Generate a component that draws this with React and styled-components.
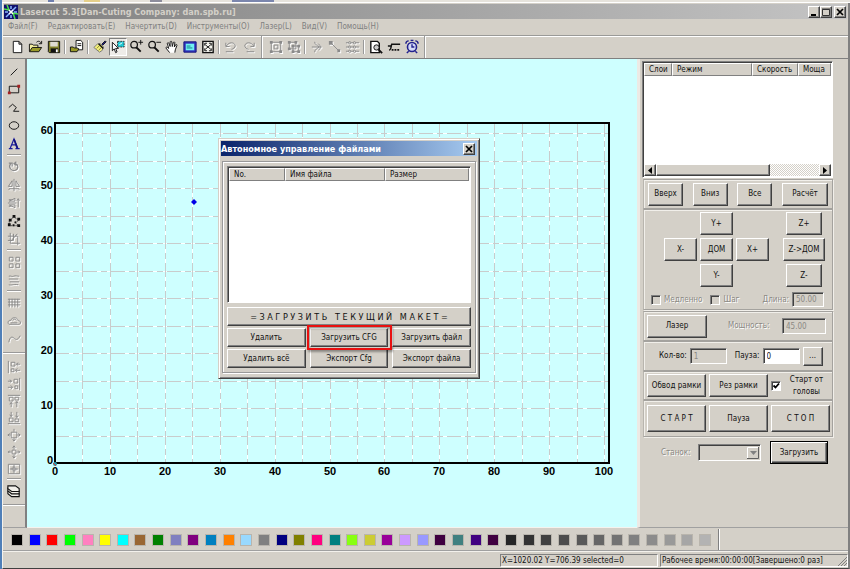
import React from "react";
import styled, { createGlobalStyle, css } from "styled-components";

const FACE = "#d4d0c8";
const MID = "#808080";
const DARK = "#404040";

const Global = createGlobalStyle`
  *, *::before, *::after { box-sizing: border-box; }
  html, body, #root { height: 100%; }
  body { margin: 0; background: ${FACE}; overflow: hidden; }
  body, button, input, select, table {
    font-family: "DejaVu Sans Condensed", "DejaVu Sans", "Noto Sans", sans-serif;
    font-size: 8px;
    line-height: 12px;
    color: #111;
  }
`;

const raised = css`
  border: 1px solid;
  border-color: #fff ${DARK} ${DARK} #fff;
  box-shadow: inset -1px -1px 0 ${MID};
`;
const sunken = css`
  border: 1px solid;
  border-color: ${MID} #fff #fff ${MID};
  box-shadow: inset 1px 1px 0 ${DARK};
`;

const Screen = styled.div`
  height: 100%;
  display: flex;
  flex-direction: column;
  border-left: 2px solid #4f7fb8;
  background: ${FACE};
`;
const Backdrop = styled.div`
  height: 3px;
  flex: none;
  background: linear-gradient(90deg, #e6e3dc 0 46px, #6f7fae 46px 52px, #e6e3dc 52px 82px, #e6d08a 82px 98px, #e6e3dc 98px 148px, #8d8d9c 148px 160px, #e6e3dc 160px 230px, #7b86ad 230px 272px, #e6e3dc 272px);
  border-bottom: 1px solid #fff;
`;
const Window = styled.main`
  flex: 1;
  min-height: 0;
  display: flex;
  flex-direction: column;
  border-left: 1px solid #f3f1ec;
  border-right: 2px solid ${MID};
  border-bottom: 1px solid ${DARK};
`;
const TitleBar = styled.header`
  height: 15px;
  flex: none;
  display: flex;
  align-items: center;
  gap: 2px;
  margin: 1px 1px 0;
  padding: 0 1px 0 0;
  background: linear-gradient(90deg, #808080, #c4c4c4);
`;
const Title = styled.h1`
  margin: 0;
  flex: 1;
  font-size: 9px;
  line-height: 14px;
  font-weight: bold;
  color: ${FACE};
`;
const CaptionButtons = styled.div`
  display: flex;
`;
const CaptionButton = styled.button`
  ${raised}
  width: 12px;
  height: 12px;
  padding: 0;
  margin-left: ${(p) => (p.$apart ? "2px" : "0")};
  background: ${FACE};
  display: grid;
  place-items: center;
`;
const MenuBar = styled.nav`
  height: 16px;
  flex: none;
  display: flex;
  align-items: center;
  gap: 10px;
  padding-left: 5px;
`;
const MenuItem = styled.button`
  border: 0;
  padding: 0;
  background: none;
  color: ${MID};
`;
const ToolBar = styled.div`
  height: 24px;
  flex: none;
  display: flex;
  align-items: center;
  padding-left: 5px;
  border-top: 1px solid #9a9a98;
  border-bottom: 1px solid ${MID};
  box-shadow: inset 0 1px 0 #fff;
`;
const ToolGroup = styled.div`
  display: flex;
  padding-left: 1px;
`;
const Divider = styled.span`
  width: 2px;
  height: ${(p) => (p.$full ? "22px" : "14px")};
  margin: ${(p) => (p.$full ? "0 3px" : "0 1px")};
  border-left: 1px solid #999;
  border-right: 1px solid #fff;
`;
const ToolButton = styled.button`
  width: 18px;
  height: 18px;
  padding: 0;
  border: 1px solid transparent;
  background: none;
  display: grid;
  place-items: center;
  svg { display: block; filter: ${(p) => (p.disabled ? "drop-shadow(1px 1px 0 #fff)" : "none")}; }
  color: ${(p) => (p.disabled ? "#8a8a8a" : "#111")};
  ${(p) => p.$pressed && css`
    border-color: ${MID} #fff #fff ${MID};
    background: #eeece8;
  `}
`;
const Body = styled.div`
  flex: 1;
  min-height: 0;
  display: flex;
`;
const SideBar = styled.div`
  width: 24px;
  flex: none;
  padding-top: 4px;
  border-right: 2px solid ${MID};
  border-bottom: 1px solid #a0a0a0;
`;
const SideGroup = styled.div`
  display: flex;
  flex-direction: column;
  align-items: center;
`;
const SideTool = styled(ToolButton)`
  height: ${(p) => (p.$short ? "17px" : "18px")};
`;
const SideRule = styled.hr`
  height: 2px;
  border: 0;
  border-top: 1px solid #999;
  border-bottom: 1px solid #fff;
  margin: ${(p) => (p.$wide ? "4px 0" : "1px 4px 2px")};
`;
const Canvas = styled.section`
  flex: 1;
  min-width: 0;
  position: relative;
  background: #ceffff;
  border-bottom: 1px solid #f5f3ee;
`;
const Plot = styled.svg`
  display: block;
  width: 100%;
  height: 100%;
  text { font: bold 11px "Liberation Sans", Arial, sans-serif; fill: #000; }
`;
const Dialog = styled.section`
  position: absolute;
  left: 191px;
  top: 79px;
  width: 262px;
  padding: 2px;
  background: ${FACE};
  border: 1px solid;
  border-color: ${FACE} ${DARK} ${DARK} ${FACE};
  box-shadow: inset 1px 1px 0 #fff, inset -1px -1px 0 ${MID};
`;
const DialogTitle = styled.header`
  display: flex;
  align-items: center;
  justify-content: space-between;
  height: 15px;
  padding: 0 2px 0 0;
  color: #fff;
  font-size: 9px;
  font-weight: bold;
  background: linear-gradient(90deg, #0a246a, #a6caf0);
`;
const DialogBody = styled.div`
  margin: 5px 1px 3px;
  padding: 4px;
  border: 1px solid #999;
  box-shadow: inset 1px 1px 0 #fff, 1px 1px 0 #fff;
`;
const ListBox = styled.div`
  ${sunken}
  height: ${(p) => (p.$tall ? "137px" : "117px")};
  padding: 1px;
  background: #fff;
  display: flex;
  flex-direction: column;
  justify-content: space-between;
  overflow: hidden;
`;
const Table = styled.table`
  width: 100%;
  table-layout: fixed;
  border-collapse: separate;
  border-spacing: 0;
`;
const HeadCell = styled.th`
  width: ${(p) => p.$w || "auto"};
  height: 13px;
  padding: 0 0 0 4px;
  background: ${FACE};
  border: 1px solid;
  border-color: #fff ${MID} ${MID} #fff;
  font-weight: normal;
  line-height: 11px;
  text-align: left;
  white-space: nowrap;
  overflow: hidden;
`;
const Push = styled.button`
  ${raised}
  min-width: 0;
  height: ${(p) => p.$h || "23px"};
  padding: 0;
  background: ${FACE};
  white-space: pre;
  text-align: center;
  ${(p) => p.$default && css`
    border-color: #000;
    box-shadow: inset 1px 1px 0 #fff, inset -1px -1px 0 ${DARK}, inset -2px -2px 0 ${MID};
  `}
`;
const DialogGrid = styled.div`
  display: grid;
  grid-template-columns: repeat(3, 1fr);
  gap: 2px 4px;
  margin-top: 4px;
`;
const WidePush = styled(Push)`
  grid-column: 1 / -1;
  font-size: 9px;
`;
const Marked = styled.div`
  position: relative;
  display: grid;
  &::after {
    content: "";
    position: absolute;
    inset: -3px -4px -3px -3px;
    border: 2px solid #e81010;
    box-shadow: 1px 2px 2px rgba(0, 0, 0, 0.35), inset 1px 2px 2px rgba(0, 0, 0, 0.25);
    pointer-events: none;
  }
`;
const Panel = styled.aside`
  width: 211px;
  flex: none;
  padding: 2px 15px 0 2px;
  border-left: 3px solid #eceae5;
  border-bottom: 1px solid #a0a0a0;
`;
const PanelEdge = styled.div`
  padding-left: 1px;
`;
const ScrollBar = styled.div`
  display: flex;
  height: 12px;
  background: repeating-conic-gradient(#fff 0 25%, ${FACE} 0 50%) 0 0 / 2px 2px;
`;
const ScrollButton = styled.button`
  ${raised}
  width: 12px;
  padding: 0;
  background: ${FACE};
  display: grid;
  place-items: center;
`;
const Thumb = styled.div`
  ${raised}
  width: 114px;
  margin-right: auto;
  background: ${FACE};
`;
const Group = styled.div`
  display: flex;
  align-items: center;
  height: ${(p) => p.$h};
  padding: 0 3px;
  gap: ${(p) => p.$gap || "3px"};
  margin-top: ${(p) => p.$mt || "0"};
  border: 1px solid #a4a29e;
  border-left-color: #b8b5ae;
  box-shadow: inset 1px 1px 0 #f1efea, 1px 1px 0 #f1efea;
  ${Push} { width: ${(p) => p.$bw || "auto"}; flex: none; }
`;
const MoveGroup = styled(Group)`
  justify-content: space-between;
  padding: 0 4px;
  ${Push} { width: 35px; }
  ${Push}:last-child { width: 46px; }
`;
const JogGroup = styled(Group)`
  flex-direction: column;
  align-items: stretch;
  gap: 5px;
  padding: 2px 8px 0 7px;
`;
const JogPad = styled.div`
  display: grid;
  grid-template-columns: 33px 33px 33px 8px 42px;
  gap: 3px;
  padding-left: 13px;
  ${Push} { width: auto; }
`;
const JogKey = styled(Push)`
  grid-area: ${(p) => p.$at};
  margin: ${(p) => (p.$inset ? "0 3px" : "0")};
`;
const Row = styled.div`
  display: flex;
  align-items: center;
  gap: ${(p) => p.$gap || "3px"};
`;
const FieldLabel = styled.label`
  white-space: nowrap;
  text-align: ${(p) => (p.$center ? "center" : "left")};
  flex: ${(p) => (p.$grow ? "1" : "none")};
  margin-left: ${(p) => p.$ml || "0"};
  ${(p) => p.$off && css`
    color: #8b8984;
    text-shadow: 1px 1px 0 #fff;
  `}
`;
const Field = styled.input`
  ${sunken}
  width: ${(p) => p.$w};
  height: ${(p) => p.$h || "16px"};
  padding: 0 3px;
  margin: 0;
  border-radius: 0;
  background: #fff;
  &:disabled { background: ${FACE}; color: #8b8984; }
`;
const Tick = styled.input`
  ${sunken}
  appearance: none;
  width: 10px;
  height: 10px;
  flex: none;
  margin: 0;
  margin-left: ${(p) => p.$ml || "0"};
  background: #fff;
  &:disabled { background: ${FACE}; }
  &:checked {
    background: #fff url("data:image/svg+xml,%3Csvg xmlns='http://www.w3.org/2000/svg' viewBox='0 0 8 8'%3E%3Cpath d='M1.5 3.5l2 2 3.5-4' fill='none' stroke='%23000' stroke-width='1.8'/%3E%3C/svg%3E") center / 8px 8px no-repeat;
  }
`;
const MachineRow = styled(Row)`
  margin: 4px 5px 0 18px;
  ${Push} { width: 58px; }
`;
const Combo = styled.select`
  ${sunken}
  appearance: none;
  width: 63px;
  height: 17px;
  margin-left: auto;
  margin-right: 6px;
  border-radius: 0;
  opacity: 1;
  background: ${FACE} url("data:image/svg+xml,%3Csvg xmlns='http://www.w3.org/2000/svg' viewBox='0 0 12 12'%3E%3Cpath d='M0 0h12v12H0z' fill='%23d4d0c8'/%3E%3Cpath d='M.5 12V.5H12' fill='none' stroke='%23fff'/%3E%3Cpath d='M11.5 0v11.5H0' fill='none' stroke='%23606060'/%3E%3Cpath d='M3 4h7l-3.500 4z' fill='%23808080'/%3E%3C/svg%3E") right 1px center / 12px 12px no-repeat;
`;
const Palette = styled.div`
  height: 23px;
  flex: none;
  display: flex;
  align-items: center;
  padding: 1px 0 0 8px;
  border-bottom: 1px solid #a0a0a0;
`;
const Swatches = styled.div`
  flex: 0 1 700px;
  display: flex;
  justify-content: space-between;
`;
const Swatch = styled.button`
  width: 12px;
  height: 12px;
  padding: 0;
  border: 1px solid #b9b5ad;
  background: ${(p) => p.$color};
`;
const PaletteEnd = styled.span`
  align-self: stretch;
  width: 2px;
  margin-left: 7px;
  border-left: 1px solid ${MID};
  border-right: 1px solid #fff;
`;
const StatusBar = styled.footer`
  height: 17px;
  flex: none;
  display: flex;
  justify-content: flex-end;
  align-items: center;
  gap: 2px;
  border-top: 1px solid #f3f1ec;
`;
const StatusCell = styled.div`
  width: ${(p) => p.$w};
  height: 13px;
  padding-left: 1px;
  white-space: nowrap;
  border: 1px solid;
  border-color: ${MID} #fff #fff ${MID};
  line-height: 11px;
  display: flex;
  justify-content: space-between;
`;

const s = { fill: "none", stroke: "currentColor", strokeWidth: 1 };
const lensBody = <g><circle cx="6.500" cy="6" r="3.500" {...s} strokeWidth="1.300" /><path d="M9 9l4.500 4.500" {...s} strokeWidth="2" /></g>;

const ICONS = {
  new: <path d="M3.500 2.500h6l3 3v9h-9zM9.500 2.500v3h3" {...s} fill="#fff" />,
  open: <g><path d="M1.500 13V5.500h3l1 1h5V9" {...s} fill="#f6f0a0" /><path d="M1.500 13.500L4.500 9h10l-3 4.500z" {...s} fill="#9a9a28" /><path d="M9 3.500c2-2 4-1 5 1M14.500 2v3h-3" {...s} /></g>,
  save: <g><path d="M2.500 2.500h12v12h-11l-1-1z" {...s} fill="#80802a" /><path d="M4.500 3h8v5h-8z" fill="#dedbd2" /><path d="M5 10h8v4H5z" fill="#111" /><path d="M10.500 11h2v3h-2z" fill="#fff" /></g>,
  import: <g><path d="M7.500 1.500h5l2 2v8h-7z" {...s} fill="#fff" /><path d="M9 5h4M9 7h4" {...s} /><path d="M1.500 13.500V8.500h3l1 1h3l2 1-2 3z" {...s} fill="#9a9a28" /></g>,
  brush: <g><path d="M10 6l4-4 1 1-4 4z" fill="#1a1a90" stroke="#111" /><path d="M2 9l4-4h3l3 3-1 4-3 2z" fill="#f3ee7c" stroke="#777" /><path d="M5 10l3-3M7 12l3-3" stroke="#8a8a28" /><path d="M7 5l5 5" stroke="#111" strokeWidth="1.500" /></g>,
  select: <g><path d="M8 2.500h7v6H8z" fill="#1fc9d4" stroke="#333" strokeDasharray="2 1" /><path d="M2.500 3.500v9l2-2 1.500 4 1.500-.8-1.500-3.700h3z" {...s} fill="#fff" /><path d="M10 6l3-2" stroke="#fff" /></g>,
  zoomIn: <g>{lensBody}<path d="M11 3.500h5M13.500 1v5" {...s} /></g>,
  zoomOut: <g>{lensBody}<path d="M11 3.500h5" {...s} /></g>,
  hand: <path d="M6 14.500L2 9.500c0-1 1.200-1.300 2-.3L5 10 3.500 4.500c.5-1 1.500-.6 1.800.3L6.500 8 6.500 3c.6-1 1.600-.8 1.800.2L8.800 8l1.200-4.500c.8-.7 1.500-.3 1.500.6L11 8.500 12.500 6c1-.5 1.500.2 1.200 1L12 11.500l-.5 3" {...s} fill="#fff" />,
  fit: <g><path d="M2 3h13v11H2z" fill="#3434c0" stroke="#111176" /><path d="M4 5h9v7H4z" fill="#6ff2f2" /><path d="M5 7.500h4M5 9.500h6" stroke="#137d88" /></g>,
  extents: <g><path d="M3 2.500h11v12H3z" {...s} fill="#f4f4ee" strokeWidth="1.500" /><path d="M5.500 6l6 5M11.500 6l-6 5M5 7V4.500h2.500M12 7V4.500H9.500M5 10v2.500h2.500M12 10v2.500H9.500" {...s} /></g>,
  undo: <path d="M3 4v4h4M3.500 7.500C6 3 12 3 13 7c0 2-2 3.500-4 4M3 13.500h8" {...s} />,
  redo: <path d="M14 4v4h-4M13.500 7.500C11 3 5 3 4 7c0 2 2 3.500 4 4M6 13.500h8" {...s} />,
  group: <g><path d="M3.500 3.500h10v10h-10zM6.500 6.500h4v4h-4z" {...s} /><path d="M2 2h3v3H2zM12 2h3v3h-3zM2 12h3v3H2zM12 12h3v3h-3z" fill="currentColor" /></g>,
  ungroup: <g><path d="M3.500 3.500h7v7h-7zM7.500 7.500h6v6h-6z" {...s} /><path d="M2 2h3v3H2zM9 2h3v3H9zM2 9h3v3H2zM6 6h3v3H6zM12 6h3v3h-3zM12 12h3v3h-3zM6 12h3v3H6z" fill="currentColor" /></g>,
  merge: <path d="M3 8.500h10M6 3c0 3 3 4 5 5.500M6 14c0-3 3-4 5-5.500M10 5l3 3.500-3 3.500" {...s} />,
  node: <g><path d="M4 4l9 9" {...s} /><path d="M2 2h4v4H2zM11 11h3v3h-3z" fill="currentColor" /></g>,
  rows: <g {...s}><path d="M1 4h3M6 4h3M11 4h4M1 8.500h3M6 8.500h3M11 8.500h4M1 13h3M6 13h3M11 13h4" /><circle cx="5" cy="4" r="1.200" /><circle cx="10" cy="4" r="1.200" /><circle cx="5" cy="8.500" r="1.200" /><circle cx="10" cy="8.500" r="1.200" /><circle cx="5" cy="13" r="1.200" /><circle cx="10" cy="13" r="1.200" /></g>,
  preview: <g><path d="M3 2.500h7l2 2v10H3z" {...s} fill="#fff" strokeWidth="1.500" /><circle cx="9" cy="9" r="2.800" {...s} fill="#ccc" /><path d="M11 11l4 4" {...s} strokeWidth="2" /></g>,
  cutter: <g><path d="M2 7.500h3M6 5.500h9M6.500 5c-2 3 0 5-3 7" {...s} strokeWidth="1.600" /><path d="M6 11.500h9" {...s} strokeWidth="2" strokeDasharray="2 1" /></g>,
  clock: <g stroke="#22228e" fill="none"><circle cx="8.500" cy="8.500" r="4.800" fill="#d5daf7" strokeWidth="1.700" /><path d="M8.500 5.500v3h2.500M5 13l-2 2M12 13l2 2M2 5c0-2 1-3 3-3M15 5c0-2-1-3-3-3M7 1.500h3" strokeWidth="1.500" /></g>,
  line: <path d="M5 12l7-7" {...s} />,
  rect: <g><path d="M3.500 4.500h10v7h-10z" {...s} /><path d="M2 10h3v3H2zM12 3h3v3h-3z" fill="#a52222" /></g>,
  poly: <path d="M3 8l4-3.500 4 3.500-3 4h6" {...s} />,
  ellipse: <ellipse cx="8.500" cy="8" rx="5" ry="4" {...s} />,
  text: <g><path d="M3 13.500h4M10 13.500h4.500M4.500 13L8.500 3l4 10M6 9.500h5" fill="none" stroke="#1b1b9b" strokeWidth="1.300" /><path d="M8.500 3.500l3.500 9.500" stroke="#111180" strokeWidth="1.800" /></g>,
  rotate: <path d="M5 5C2 8.500 5.500 13.500 10 12c4-2 3-7-1-7M3 4.500h3.500v3.500M11 3L8.500 5l2.500 2" {...s} strokeWidth="1.300" />,
  mirrorH: <path d="M8.500 2v13M6.500 4v6h-4zM10.500 4v6h4zM4 12.500h9M4 12l-1 1 1 1M13 12l1 1-1 1" {...s} />,
  mirrorV: <path d="M2 8.500h9M3.500 6.500h6v-3zM3.500 10.500h6v3zM13 4v9M11.500 6L13 4l1.500 2M3 5h3M3 12h3" {...s} />,
  nodes: <g><path d="M3.500 12V8l5-4 5 4-4 2 4 3.500H4" {...s} strokeDasharray="1 1" /><path d="M2 11h3v3H2zM3 6h3v3H3zM7 2h3v3H7zM12 5h3v3h-3zM9 9h2v2H9zM12 12h3v3h-3zM7 12h2v2H7z" fill="currentColor" /></g>,
  crop: <path d="M4.500 2v11H15M2 5.500h10.500V15M2 10h6M8 3v7M12 3l-7 8" {...s} />,
  array: <path d="M3.500 3.500h4v4h-4zM10.500 3.500h4v4h-4zM3.500 10.500h4v4h-4zM10.500 10.500h4v4h-4z" {...s} />,
  lines: <path d="M3 4.500c2-1 3 1 5 0s4 0 6 0M3 7.500h10M4 10.500h10M3 13.500c3 1 4-1 10 0" {...s} />,
  hatch: <path d="M2 4.500h13M2 7.500h13M2 10.500h13M3.500 4v9M6.500 4v9M9.500 4v9M12.500 4v9" {...s} />,
  cloud: <g><path d="M3 12c-2-2 0-5 2-4 1-4 7-4 8 0 3 0 3 4 1 4z" {...s} /><path d="M5 10.500h7M7 8c1-2 3-2 4 0" {...s} /></g>,
  curve: <path d="M3 12c1-7 4-6 6-4s4 1 6-3" {...s} />,
  alignL: <path d="M2.500 2v13M5.500 3.500h4v4h-4zM5.500 10.500h3v3h-3zM15 5.500h-4M13 4l-2 1.500 2 1.500M15 12h-5M12 10l-2 2 2 2" {...s} />,
  alignR: <path d="M14.500 2v13M8.500 3.500h4v4h-4zM9.500 10.500h3v3h-3zM2 5.500h4M4 4l2 1.500L4 7M2 12h5M5 10l2 2-2 2" {...s} />,
  alignT: <path d="M2 2.500h13M3.500 4.500h4v4h-4zM9.500 4.500h4v3h-4zM5.500 15v-5M4 12l1.500-2L7 12M11.500 15V9M10 11l1.500-2 1.500 2" {...s} />,
  alignB: <path d="M2 14.500h13M3.500 8.500h4v4h-4zM9.500 9.500h4v3h-4zM5.500 2v5M4 5l1.500 2L7 5M11.500 2v6M10 6l1.500 2L13 6" {...s} />,
  centerH: <path d="M8.500 2v3M8.500 12v3M5.500 5.500h6v6h-6zM2 8.500h3M12 8.500h3M4 7L2 8.500 4 10M13 7l2 1.500-2 1.500M7 13l1.500 2 1.500-2" {...s} />,
  centerV: <path d="M8.500 2v4M8.500 11v4M6.500 6.500h4v4h-4zM2 8.500h4M11 8.500h4M4 7L2.500 8.500 4 10M13 7l1.500 1.500L13 10M7 4l1.500-2L10 4M7 13l1.500 2 1.500-2" {...s} />,
  centerPage: <path d="M2.500 3.500h12v10h-12zM4 8.500h9M8.500 4v9M6.500 7v3M10.500 7v3M7 6.500h3M7 10.500h3" {...s} />,
  layers: <g {...s} fill="#f2f0ea" strokeWidth="1.200"><path d="M2 8.500h8l4 3v3H6l-4-3z" /><path d="M2 5.500h8l4 3v3H6l-4-3z" /><path d="M2 3h8l4 3v3H6L2 6z" /></g>,
};

const Icon = ({ name }) => <svg width="16" height="16" viewBox="0 0 17 17" aria-hidden="true">{ICONS[name]}</svg>;

const TOP = [
  { tools: ["new", "open", "save"] },
  { tools: ["import"] },
  { tools: ["brush", "select", "zoomIn", "zoomOut", "hand", "fit", "extents"] },
  { tools: ["undo", "redo"], off: true, full: true },
  { tools: ["group", "ungroup"], off: true },
  { tools: ["merge", "node", "rows"], off: true },
  { tools: ["preview", "cutter", "clock"], full: true },
];
const SIDE = [
  { tools: ["line", "rect", "poly", "ellipse", "text"] },
  { tools: ["rotate", "mirrorH", "mirrorV", "nodes", "crop"], off: true },
  { tools: ["array", "lines"], off: true },
  { tools: ["hatch", "cloud", "curve"], off: true, wide: true },
  { tools: ["alignL", "alignR", "alignT", "alignB", "centerH", "centerV", "centerPage"], off: true, short: true },
  { tools: ["layers"], wide: true },
];
const MENU = ["Файл(F)", "Редактировать(E)", "Начертить(D)", "Инструменты(O)", "Лазер(L)", "Вид(V)", "Помощь(H)"];
const COLORS = ["#000000", "#0000ff", "#ff0000", "#00ff00", "#ff80c0", "#ffff00", "#00ffff", "#996633", "#008000", "#8080c0", "#800080", "#0080c0", "#ff8000", "#99d9ff", "#808080", "#000080", "#808000", "#ff0080", "#008080", "#88ff11", "#cccc33", "#990099", "#cc99ff", "#9999ff", "#400040", "#408080", "#400080", "#400040", "#262626", "#333333", "#404040", "#4d4d4d", "#595959", "#666666", "#737373", "#808080", "#8c8c8c", "#999999", "#a6a6a6", "#b3b3b3"];

const CloseGlyph = () => <svg width="8" height="8" viewBox="0 0 8 8"><path d="M1 1l6 6M7 1L1 7" stroke="#000" strokeWidth="1.700" /></svg>;

function WorkArea() {
  const x0 = 28, y0 = 404, top = 64, right = 582;
  const px = (u) => Math.round(x0 + u * 5.49);
  const py = (u) => Math.round(y0 - u * 5.5);
  const paths = [];
  for (let u = 5; u <= 100; u += 5) paths.push(`M${px(u)}.5 ${top}V${y0}`);
  for (let u = 5; u <= 60; u += 5) paths.push(`M${x0} ${py(u)}.5H${right}`);
  const d = paths.join("");
  const tens = [0, 10, 20, 30, 40, 50, 60, 70, 80, 90, 100];
  return (
    <Plot>
      <path d={d} stroke="#fff" fill="none" />
      <path d={d} stroke="#c9cccc" fill="none" strokeDasharray="14 4 6 4" />
      <path d={`M${x0} ${top}H${right}V${y0}H${x0}z`} fill="none" stroke="#000" strokeWidth="2" />
      {tens.map((n) => <text key={n} x={px(n)} y={y0 + 12} textAnchor="middle">{n}</text>)}
      {tens.slice(0, 7).map((n) => <text key={n} x={x0 - 2} y={py(n) + 1} textAnchor="end">{n}</text>)}
      <circle cx={x0} cy={y0 + 1} r="2" fill="#2b9aa8" />
      <path d={`M${x0 - 2} ${y0}l3 3`} stroke="#d33" />
      <path d="M167 140l3 3-3 3-3-3z" fill="#0000e8" />
    </Plot>
  );
}

function FileDialog() {
  return (
    <Dialog role="dialog" aria-label="Автономное управление файлами">
      <DialogTitle>
        <span>Автономное управление файлами</span>
        <CaptionButton aria-label="Закрыть"><CloseGlyph /></CaptionButton>
      </DialogTitle>
      <DialogBody>
        <ListBox $tall>
          <Table>
            <thead><tr>
              <HeadCell $w="56px">No.</HeadCell>
              <HeadCell $w="100px">Имя файла</HeadCell>
              <HeadCell $w="84px">Размер</HeadCell>
              <HeadCell />
            </tr></thead>
          </Table>
        </ListBox>
        <DialogGrid>
          <WidePush $h="19px">{"= З А Г Р У З И Т Ь   Т Е К У Щ И Й   М А К Е Т ="}</WidePush>
          <Push $h="19px">Удалить</Push>
          <Marked><Push $h="19px">Загрузить CFG</Push></Marked>
          <Push $h="19px">Загрузить файл</Push>
          <Push $h="19px">Удалить всё</Push>
          <Push $h="19px">Экспорт Cfg</Push>
          <Push $h="19px">Экспорт файла</Push>
        </DialogGrid>
      </DialogBody>
    </Dialog>
  );
}

function ControlPanel() {
  return (
    <Panel>
      <ListBox>
        <Table>
          <thead><tr>
            <HeadCell $w="28px">Слои</HeadCell>
            <HeadCell $w="80px">Режим</HeadCell>
            <HeadCell $w="46px">Скорость</HeadCell>
            <HeadCell>Моща</HeadCell>
          </tr></thead>
        </Table>
        <ScrollBar>
          <ScrollButton aria-label="Влево"><svg width="4" height="7" viewBox="0 0 4 7"><path d="M4 0v7L0 3.500z" /></svg></ScrollButton>
          <Thumb />
          <ScrollButton aria-label="Вправо"><svg width="4" height="7" viewBox="0 0 4 7"><path d="M0 0v7l4-3.500z" /></svg></ScrollButton>
        </ScrollBar>
      </ListBox>
      <PanelEdge>
        <MoveGroup $h="30px" $mt="1px">
          <Push>Вверх</Push><Push>Вниз</Push><Push>Все</Push><Push>Расчёт</Push>
        </MoveGroup>
        <JogGroup $h="101px">
          <JogPad>
            <JogKey $at="1 / 2">Y+</JogKey>
            <JogKey $at="1 / 5" $inset>Z+</JogKey>
            <JogKey $at="2 / 1">X-</JogKey>
            <JogKey $at="2 / 2">ДОМ</JogKey>
            <JogKey $at="2 / 3">X+</JogKey>
            <JogKey $at="2 / 5">{"Z->ДОМ"}</JogKey>
            <JogKey $at="3 / 2">Y-</JogKey>
            <JogKey $at="3 / 5" $inset>Z-</JogKey>
          </JogPad>
          <Row>
            <Tick type="checkbox" id="slow" disabled /><FieldLabel htmlFor="slow" $off>Медленно</FieldLabel>
            <Tick type="checkbox" id="step" disabled $ml="5px" /><FieldLabel htmlFor="step" $off $grow>Шаг</FieldLabel>
            <FieldLabel htmlFor="len" $off>Длина:</FieldLabel><Field id="len" $w="32px" $h="15px" defaultValue="50.00" disabled />
          </Row>
        </JogGroup>
        <Group $h="30px" $bw="60px" $mt="1px">
          <Push>Лазер</Push>
          <FieldLabel htmlFor="pow" $off $grow $ml="18px">Мощность:</FieldLabel>
          <Field id="pow" $w="44px" defaultValue="45.00" disabled />
          <span />
        </Group>
        <Group $h="30px" $bw="20px">
          <FieldLabel htmlFor="cnt" $ml="12px">Кол-во:</FieldLabel><Field id="cnt" $w="37px" defaultValue="1" disabled />
          <FieldLabel htmlFor="pause" $ml="5px">Пауза:</FieldLabel><Field id="pause" $w="37px" defaultValue="0" />
          <Push $h="19px">...</Push>
        </Group>
        <Group $h="29px" $bw="59px">
          <Push>Обвод рамки</Push><Push>Рез рамки</Push>
          <Tick type="checkbox" id="head" defaultChecked />
          <FieldLabel htmlFor="head" $center $grow>Старт от<br />головы</FieldLabel>
        </Group>
        <Group $h="37px" $bw="59px">
          <Push $h="27px">С Т А Р Т</Push><Push $h="27px">Пауза</Push><Push $h="27px">С Т О П</Push>
        </Group>
        <MachineRow>
          <FieldLabel htmlFor="machine" $off>Станок:</FieldLabel>
          <Combo id="machine" disabled />
          <Push $default>Загрузить</Push>
        </MachineRow>
      </PanelEdge>
    </Panel>
  );
}

export default function App() {
  return (
    <Screen>
      <Global />
      <Backdrop />
      <Window>
        <TitleBar>
          <svg width="14" height="14" viewBox="0 0 14 14"><path d="M0 0h14v14H0z" fill="#10106c" /><path d="M0 4l5 1-2-5M14 9l-5-1 2 6" stroke="#4be04b" fill="none" strokeWidth="1.500" /><path d="M2 12l4-4M12 2L8 6M7 1v3M7 10v3M1 7h3M10 7h3" stroke="#8ab6ff" strokeWidth="1.500" /><path d="M5 5l4 4M9 5L5 9" stroke="#fff" strokeWidth="1.500" /></svg>
          <Title>Lasercut 5.3[Dan-Cuting Company: dan.spb.ru]</Title>
          <CaptionButtons>
            <CaptionButton aria-label="Свернуть"><svg width="8" height="8"><path d="M1 6h5v2H1z" /></svg></CaptionButton>
            <CaptionButton aria-label="Развернуть"><svg width="8" height="8"><path d="M.5 1.500h7v6h-7zM0 1h8" fill="none" stroke="#333" /></svg></CaptionButton>
            <CaptionButton aria-label="Закрыть" $apart><CloseGlyph /></CaptionButton>
          </CaptionButtons>
        </TitleBar>
        <MenuBar>{MENU.map((m) => <MenuItem key={m}>{m}</MenuItem>)}</MenuBar>
        <ToolBar>
          {TOP.map((g, i) => (
            <React.Fragment key={i}>
              <ToolGroup>
                {g.tools.map((t) => <ToolButton key={t} aria-label={t} disabled={g.off} $pressed={t === "select"}><Icon name={t} /></ToolButton>)}
              </ToolGroup>
              <Divider $full={g.full} />
            </React.Fragment>
          ))}
        </ToolBar>
        <Body>
          <SideBar>
            {SIDE.map((g, i) => (
              <React.Fragment key={i}>
                <SideGroup>
                  {g.tools.map((t) => <SideTool key={t} aria-label={t} disabled={g.off && t !== "nodes"} $short={g.short}><Icon name={t} /></SideTool>)}
                </SideGroup>
                <SideRule $wide={g.wide} />
              </React.Fragment>
            ))}
          </SideBar>
          <Canvas>
            <WorkArea />
            <FileDialog />
          </Canvas>
          <ControlPanel />
        </Body>
        <Palette>
          <Swatches>{COLORS.map((c, i) => <Swatch key={i} $color={c} aria-label={c} />)}</Swatches>
          <PaletteEnd />
        </Palette>
        <StatusBar>
          <StatusCell $w="158px">X=1020.02 Y=706.39 selected=0</StatusCell>
          <StatusCell $w="188px">
            Рабочее время:00:00:00[Завершено:0 раз]
            <svg width="10" height="11" viewBox="0 0 10 11"><path d="M1 11L10 2M4 11l6-6M7 11l3-3" stroke="#808080" /></svg>
          </StatusCell>
        </StatusBar>
      </Window>
    </Screen>
  );
}
